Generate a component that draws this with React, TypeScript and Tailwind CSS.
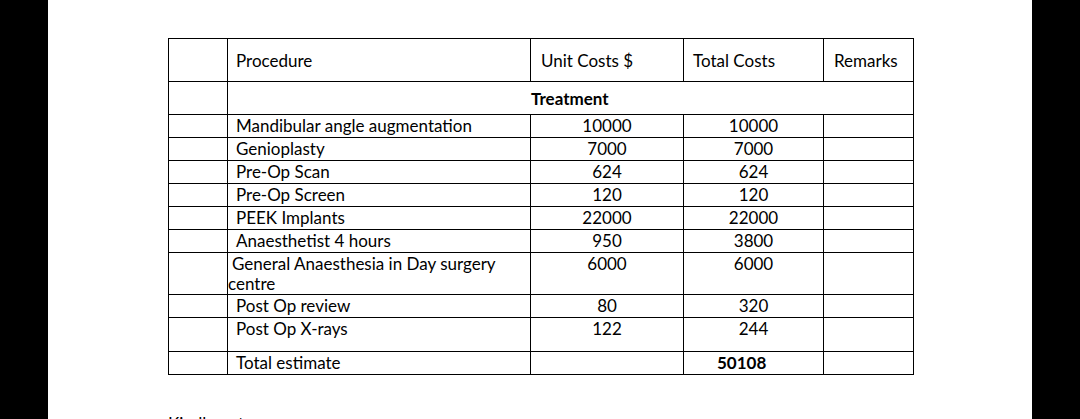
const rows = [
  { name: "Mandibular angle augmentation", unit: "10000", total: "10000" },
  { name: "Genioplasty", unit: "7000", total: "7000" },
  { name: "Pre-Op Scan", unit: "624", total: "624" },
  { name: "Pre-Op Screen", unit: "120", total: "120" },
  { name: "PEEK Implants", unit: "22000", total: "22000" },
  { name: "Anaesthetist 4 hours", unit: "950", total: "3800" },
];

const cell = "border border-black p-0 pt-[1px] align-top";
const headCell = "border border-black pt-[2px] align-middle";

export default function App() {
  return (
    <div className="h-[419px] overflow-hidden bg-black font-['Lato',sans-serif] text-[17px] leading-[20px] text-black">
      <div className="ml-[48px] h-full w-[984px] bg-white pt-[38px] pl-[120px]">
        <table className="table-fixed border-collapse">
          <colgroup>
            <col className="w-[59px]" />
            <col className="w-[303px]" />
            <col className="w-[153px]" />
            <col className="w-[140px]" />
            <col className="w-[90px]" />
          </colgroup>
          <tbody>
            <tr className="h-[43px]">
              <td className={cell} />
              <td className={`${headCell} pl-[8px]`}>Procedure</td>
              <td className={`${headCell} pl-[10px]`}>Unit Costs $</td>
              <td className={`${headCell} pl-[9px]`}>Total Costs</td>
              <td className={`${headCell} pl-[10px]`}>Remarks</td>
            </tr>
            <tr className="h-[33px]">
              <td className={cell} />
              <td colSpan={4} className={`${headCell} pl-[303px] font-bold`}>
                Treatment
              </td>
            </tr>
            {rows.map((r) => (
              <tr key={r.name} className="h-[23px]">
                <td className={cell} />
                <td className={`${cell} pl-[8px]`}>{r.name}</td>
                <td className={`${cell} text-center`}>{r.unit}</td>
                <td className={`${cell} text-center`}>{r.total}</td>
                <td className={cell} />
              </tr>
            ))}
            <tr className="h-[42px]">
              <td className={cell} />
              <td className={`${cell} pr-[30px] indent-[4px]`}>General Anaesthesia in Day surgery centre</td>
              <td className={`${cell} text-center`}>6000</td>
              <td className={`${cell} text-center`}>6000</td>
              <td className={cell} />
            </tr>
            <tr className="h-[23px]">
              <td className={cell} />
              <td className={`${cell} pl-[8px]`}>Post Op review</td>
              <td className={`${cell} text-center`}>80</td>
              <td className={`${cell} text-center`}>320</td>
              <td className={cell} />
            </tr>
            <tr className="h-[34px]">
              <td className={cell} />
              <td className={`${cell} pl-[8px]`}>Post Op X-rays</td>
              <td className={`${cell} text-center`}>122</td>
              <td className={`${cell} text-center`}>244</td>
              <td className={cell} />
            </tr>
            <tr className="h-[23px]">
              <td className={cell} />
              <td className={`${cell} pl-[8px]`}>Total estimate</td>
              <td className={cell} />
              <td className={`${cell} pl-[33px] font-bold`}>50108</td>
              <td className={cell} />
            </tr>
          </tbody>
        </table>
        <p className="mt-[39px]">Kindly note</p>
      </div>
    </div>
  );
}
